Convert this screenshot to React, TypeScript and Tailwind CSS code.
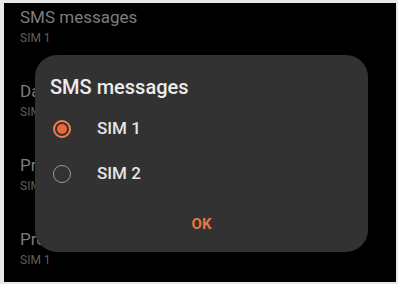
import React, { useState } from "react";

const items = [
    { title: "SMS messages", sub: "SIM 1" },
    { title: "Data", sub: "SIM 1" },
    { title: "Preferred SIM", sub: "SIM 1" },
    { title: "Profile", sub: "SIM 1" },
];

export default function App() {
    const [sim, setSim] = useState("SIM 1");

    return (
        <div className="w-[398px] h-[284px] bg-[#e8e8e8] pt-[3px] pl-[4px] pr-[2px] pb-[2px]" style={{ fontFamily: "Roboto, 'Noto Sans', sans-serif" }}>
            <div className="relative w-full h-full bg-black overflow-hidden">
                {/* Background list */}
                <div className="flex flex-col pl-[16px] pt-[2px]">
                    {items.map((it) => (
                        <div key={it.title} className="h-[74px] flex flex-col">
                            <span className="text-[17px] leading-[24px] text-[#7d7d7d]">{it.title}</span>
                            <span className="text-[12px] leading-[16px] text-[#5f5f5f] mt-[1px]">{it.sub}</span>
                        </div>
                    ))}
                </div>

                {/* Dialog */}
                <div className="absolute left-[31px] top-[52px] w-[333px] h-[197px] rounded-[22px] bg-[#323232] flex flex-col px-[15px]">
                    <h2 className="text-[20px] leading-[24px] text-[#ececec] font-medium mt-[20px]">SMS messages</h2>
                    <div className="flex flex-col mt-[7px]">
                        {["SIM 1", "SIM 2"].map((s) => (
                            <button key={s} onClick={() => setSim(s)} className="flex items-center h-[45px] text-left">
                                {sim === s ? (
                                    <span className="w-[18px] h-[18px] ml-[3px] rounded-full border-2 border-[#f08050] flex items-center justify-center">
                                        <span className="w-[10px] h-[10px] rounded-full bg-[#f0663a]" />
                                    </span>
                                ) : (
                                    <span className="w-[18px] h-[18px] ml-[3px] rounded-full border-[1.5px] border-[#9a9a9a]" />
                                )}
                                <span className="ml-[26px] text-[17px] text-[#e6e6e6] font-medium">{s}</span>
                            </button>
                        ))}
                    </div>
                    <div className="flex justify-center mt-[13px]">
                        <button className="text-[15px] font-bold text-[#e9743f] px-[10px] py-[4px]">OK</button>
                    </div>
                </div>
            </div>
        </div>
    );
}
